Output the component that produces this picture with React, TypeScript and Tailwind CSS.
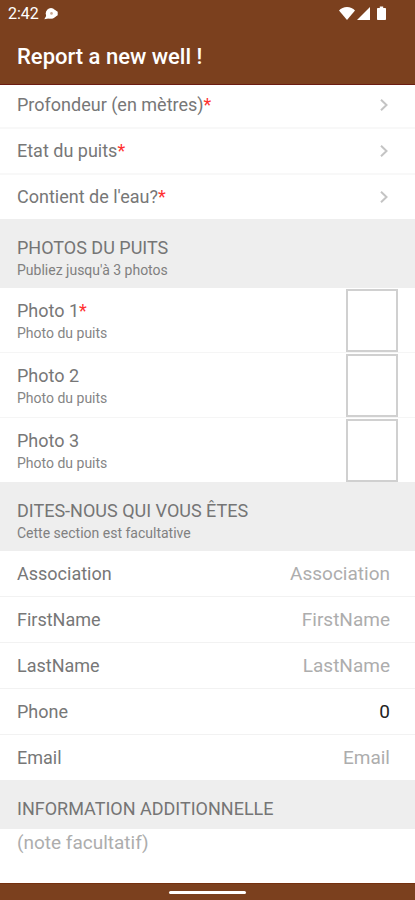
import React, { useState } from 'react';

const selectRows = ['Profondeur (en mètres)', 'Etat du puits', "Contient de l'eau?"];

const photoRows = [
  { id: 'photo1', label: 'Photo 1', required: true },
  { id: 'photo2', label: 'Photo 2', required: false },
  { id: 'photo3', label: 'Photo 3', required: false },
];

const contactFields = [
  { id: 'association', label: 'Association', type: 'text' },
  { id: 'firstName', label: 'FirstName', type: 'text' },
  { id: 'lastName', label: 'LastName', type: 'text' },
  { id: 'phone', label: 'Phone', type: 'tel' },
  { id: 'email', label: 'Email', type: 'email' },
];

function Required() {
  return <span className="text-[#ff3030]">*</span>;
}

function StatusBar() {
  return (
    <div className="flex h-7 items-center justify-between pl-2 pr-[29px] text-white">
      <div className="flex items-center gap-1">
        <span className="text-base leading-5">2:42</span>
        <svg className="h-3 w-4" viewBox="0 0 16 12">
          <circle cx="8" cy="5.4" r="5.3" fill="currentColor" />
          <path d="M4 6.500 1.300 11.300 7 10.200z" fill="currentColor" />
          <path d="M12 2l2.700 1.800v3.400L12 9z" fill="currentColor" />
          <circle cx="8.500" cy="5.400" r="1.300" fill="#c9a791" />
        </svg>
      </div>
      <div className="flex items-center pb-0.5">
        <svg className="h-4 w-4" viewBox="0 0 16 16" fill="currentColor">
          <path d="M8 15 0 5.500C2 3.300 4.800 2 8 2s6 1.300 8 3.500z" />
        </svg>
        <svg className="ml-0.5 h-4 w-[13px]" viewBox="0 0 13 16" fill="currentColor">
          <path d="M13 2v13H0z" />
        </svg>
        <svg className="ml-[7px] h-4 w-[9px]" viewBox="0 0 9 16" fill="currentColor">
          <path d="M2.800 1.500h3.400V3H8.200q.8 0 .8.800v10.400q0 .8-.8.800H.8q-.8 0-.8-.8V3.800Q0 3 .8 3h2z" />
        </svg>
      </div>
    </div>
  );
}

function SectionHeader({ title, subtitle }: { title: string; subtitle?: string }) {
  return (
    <div className="bg-[#eeeeee] px-[17px] pt-[17px] pb-2">
      <h2 className="text-lg leading-6 text-[#757575]">{title}</h2>
      {subtitle && <p className="text-sm leading-5 text-[#808080]">{subtitle}</p>}
    </div>
  );
}

export default function App() {
  const [values, setValues] = useState<Record<string, string>>({ phone: '0' });
  const [note, setNote] = useState('');

  const handleChange = (id: string, value: string) => {
    setValues((prev) => ({ ...prev, [id]: value }));
  };

  return (
    <div className="flex min-h-screen flex-col bg-white font-[Roboto,sans-serif] text-lg text-[#777777]">
      <header className="border-b border-[#6b1c12] bg-[#7b401e]">
        <StatusBar />
        <h1 className="px-[17px] pt-[15px] pb-[13px] text-[22px] leading-7 font-medium text-white">
          Report a new well !
        </h1>
      </header>

      <main className="flex-1">
        {/* first row is partly scrolled under the header */}
        <div className="-mt-1">
          {selectRows.map((label) => (
            <button
              key={label}
              type="button"
              className="flex h-[46px] w-full items-center justify-between border-t-2 border-[#f8f8f8] pl-[17px] pr-[27px] text-left first:border-transparent"
            >
              <span>
                {label}
                <Required />
              </span>
              <svg className="h-3 w-2" viewBox="0 0 8 12" fill="none" stroke="#c4c4c4" strokeWidth="2">
                <path d="M1 .8 6.500 6 1 11.200" />
              </svg>
            </button>
          ))}
        </div>

        <SectionHeader title="PHOTOS DU PUITS" subtitle="Publiez jusqu'à 3 photos" />
        <div className="-mt-px">
          {photoRows.map((photo) => (
            <div
              key={photo.id}
              className="flex h-[65px] items-center justify-between border-t border-[#f5f5f5] pl-[17px] pr-[17px] first:border-transparent"
            >
              <div className="pt-0.5">
                <p className="leading-6">
                  {photo.label}
                  {photo.required && <Required />}
                </p>
                <p className="text-sm leading-5 text-[#858585]">Photo du puits</p>
              </div>
              <button
                type="button"
                aria-label={photo.label}
                className="h-[63px] w-[52px] self-end border-2 border-[#d0d0d0] bg-white"
              />
            </div>
          ))}
        </div>

        <SectionHeader title="DITES-NOUS QUI VOUS ÊTES" subtitle="Cette section est facultative" />
        <div className="-mt-px">
          {contactFields.map((field) => (
            <div
              key={field.id}
              className="flex h-[46px] items-center border-t border-[#f2f2f2] pl-[17px] pr-[25px] first:border-transparent"
            >
              <label htmlFor={field.id}>{field.label}</label>
              <input
                id={field.id}
                type={field.type}
                placeholder={field.label}
                value={values[field.id] || ''}
                onChange={(e) => handleChange(field.id, e.target.value)}
                className="min-w-0 flex-1 bg-transparent text-right text-[19px] text-[#222222] outline-none placeholder:text-[#adadad]"
              />
            </div>
          ))}
        </div>

        <SectionHeader title="INFORMATION ADDITIONNELLE" />
        <textarea
          aria-label="INFORMATION ADDITIONNELLE"
          placeholder="(note facultatif)"
          rows={1}
          value={note}
          onChange={(e) => setNote(e.target.value)}
          className="block w-full resize-none px-[17px] text-[19px] leading-7 outline-none placeholder:text-[#adadad]"
        />
      </main>

      <footer className="flex h-[17px] items-center justify-center border-t border-[#74300f] bg-[#7b401e]">
        <div className="h-[3px] w-[77px] rounded-full bg-white" />
      </footer>
    </div>
  );
}
